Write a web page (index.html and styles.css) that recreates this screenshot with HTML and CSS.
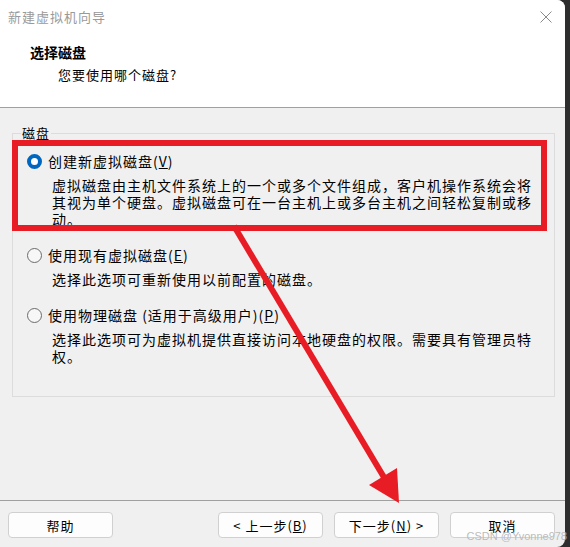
FILE: index.html
```html
<!DOCTYPE html>
<html lang="zh-CN">
<head>
<meta charset="utf-8">
<title>新建虚拟机向导</title>
<link rel="stylesheet" href="styles.css">
</head>
<body>
<div class="window">
  <header class="header">
    <div class="titlebar">
      <span class="title">新建虚拟机向导</span>
      <svg class="close" width="12" height="12" viewBox="0 0 12 12"><path d="M0.5 0.5L11.5 11.5M11.5 0.5L0.5 11.5" stroke="#8a8a8a" stroke-width="1"/></svg>
    </div>
    <div class="heading">选择磁盘</div>
    <div class="subheading">您要使用哪个磁盘?</div>
  </header>

  <main class="main">
    <fieldset class="group">
      <legend class="legend">磁盘</legend>
      <div class="options">
        <div class="option">
          <div class="option-row"><span class="radio checked"></span><span class="label">创建新虚拟磁盘(<u>V</u>)</span></div>
          <p class="desc">虚拟磁盘由主机文件系统上的一个或多个文件组成，客户机操作系统会将其视为单个硬盘。虚拟磁盘可在一台主机上或多台主机之间轻松复制或移动。</p>
        </div>
        <div class="option">
          <div class="option-row"><span class="radio"></span><span class="label">使用现有虚拟磁盘(<u>E</u>)</span></div>
          <p class="desc">选择此选项可重新使用以前配置的磁盘。</p>
        </div>
        <div class="option">
          <div class="option-row"><span class="radio"></span><span class="label">使用物理磁盘 (适用于高级用户)(<u>P</u>)</span></div>
          <p class="desc">选择此选项可为虚拟机提供直接访问本地硬盘的权限。需要具有管理员特权。</p>
        </div>
      </div>
    </fieldset>
  </main>

  <footer class="footer">
    <button class="btn btn-help">帮助</button>
    <button class="btn">&lt; 上一步(<u>B</u>)</button>
    <button class="btn">下一步(<u>N</u>) &gt;</button>
    <button class="btn">取消</button>
  </footer>

  <svg class="annotation" width="565" height="547" viewBox="0 0 565 547">
    <rect x="15" y="143" width="529" height="85" fill="none" stroke="#e81c24" stroke-width="6"/>
    <line x1="234" y1="226" x2="385" y2="479" stroke="#e81c24" stroke-width="6"/>
    <polygon points="369,485 397,468 399,503" fill="#e81c24"/>
  </svg>
</div>
<div class="watermark">CSDN @Yvonne978</div>
</body>
</html>
```

FILE: styles.css
```css
html, body {
  margin: 0;
  padding: 0;
}

body {
  width: 570px;
  height: 547px;
  background: #2e2e2e;
  overflow: hidden;
  position: relative;
  font-family: "Noto Sans CJK SC", "Noto Sans", sans-serif;
  color: #000;
}

.window {
  position: relative;
  width: 565px;
  height: 547px;
  background: #f0f0f0;
  border-top-right-radius: 8px;
  border-bottom-right-radius: 8px;
  overflow: hidden;
  display: flex;
  flex-direction: column;
}

.header {
  height: 107px;
  background: #fff;
  border-bottom: 1px solid #a0a0a0;
  flex: none;
}

.titlebar {
  height: 34px;
  display: flex;
  align-items: center;
  justify-content: space-between;
  padding: 0 13px 0 8px;
}

.title {
  font-size: 13px;
  letter-spacing: 1px;
  color: #9a9a9a;
  line-height: 20px;
}

.close {
  display: block;
}

.heading {
  margin-top: 8px;
  padding-left: 30px;
  font-size: 14px;
  font-weight: 700;
  line-height: 20px;
}

.subheading {
  margin-top: 3px;
  padding-left: 58px;
  font-size: 13px;
  letter-spacing: 1px;
  line-height: 20px;
}

.main {
  flex: 1;
  padding: 16px 10px 0 12px;
}

.group {
  margin: 0;
  padding: 10px 10px 31px 8px;
  border: 1px solid #dcdcdc;
  min-width: 0;
}

.legend {
  padding: 0 1px;
  font-size: 13px;
  letter-spacing: 1px;
  line-height: 18px;
}

.options {
  padding-left: 6px;
  display: flex;
  flex-direction: column;
  gap: 18px;
}

.option-row {
  display: flex;
  align-items: center;
  gap: 6px;
  height: 18px;
}

.label {
  font-size: 14px;
  letter-spacing: 1px;
  line-height: 18px;
  white-space: nowrap;
}

.radio {
  box-sizing: border-box;
  width: 15px;
  height: 15px;
  border-radius: 50%;
  border: 1px solid #6b6b6b;
  background: #f7f7f7;
  flex: none;
}

.radio.checked {
  border: 4.5px solid #0067c0;
  background: #fff;
}

.desc {
  margin: 7px 0 0 25px;
  max-width: 482px;
  font-size: 14px;
  letter-spacing: 1px;
  line-height: 17px;
}

.footer {
  flex: none;
  border-top: 1px solid #a0a0a0;
  padding: 11px 10px 9px 8px;
  display: flex;
  gap: 11px;
}

.btn {
  box-sizing: border-box;
  width: 105px;
  height: 26px;
  padding: 0;
  border: 1px solid #d0d0d0;
  border-radius: 4px;
  background: #fdfdfd;
  font-family: "Noto Sans CJK SC", "Noto Sans", sans-serif;
  font-size: 13px;
  letter-spacing: 1px;
  color: #000;
}

.btn-help {
  margin-right: auto;
}

.annotation {
  position: absolute;
  left: 0;
  top: 0;
  pointer-events: none;
}

.watermark {
  position: absolute;
  right: 3px;
  bottom: 5px;
  font-family: "Liberation Sans", Arial, sans-serif;
  font-size: 11px;
  line-height: 12px;
  color: rgba(170, 170, 170, 0.8);
  text-shadow: 0 0 1px rgba(255, 255, 255, 0.6);
}
```
